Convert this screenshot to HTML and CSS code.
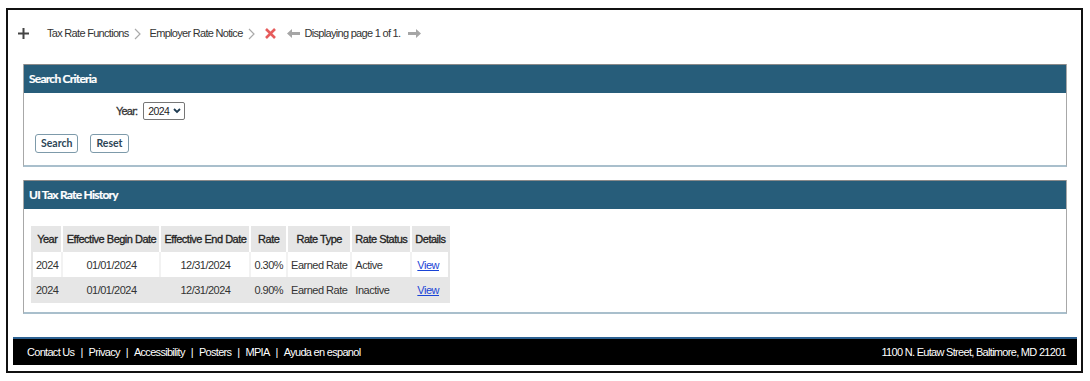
FILE: index.html
```html
<!DOCTYPE html>
<html>
<head>
<meta charset="utf-8">
<link rel="stylesheet" href="styles.css">
</head>
<body>
<div class="frame">
  <div class="crumbs">
    <svg class="plus" width="11" height="11" viewBox="0 0 11 11"><path d="M5.5 0v11M0 5.5h11" stroke="#444" stroke-width="2"/></svg>
    <span class="crumb">Tax Rate Functions</span>
    <svg class="chev" width="8" height="12" viewBox="0 0 8 12"><path d="M1 1l5 5-5 5" fill="none" stroke="#aaa" stroke-width="1.2"/></svg>
    <span class="crumb">Employer Rate Notice</span>
    <svg class="chev" width="8" height="12" viewBox="0 0 8 12"><path d="M1 1l5 5-5 5" fill="none" stroke="#aaa" stroke-width="1.2"/></svg>
    <svg class="close" width="11" height="11" viewBox="0 0 11 11"><path d="M1 1l9 9M10 1l-9 9" stroke="#e65c5c" stroke-width="2.6"/></svg>
    <svg class="arrow-l" width="13" height="9" viewBox="0 0 13 9"><path d="M0 4.5L5 0v3h8v3H5v3z" fill="#a6a6a6"/></svg>
    <span class="crumb">Displaying page 1 of 1.</span>
    <svg class="arrow-r" width="13" height="9" viewBox="0 0 13 9"><path d="M13 4.5L8 0v3H0v3h8v3z" fill="#a6a6a6"/></svg>
  </div>

  <div class="panel">
    <div class="panel-head">Search Criteria</div>
    <div class="panel-body search-body">
      <div class="year-row">
        <span class="label">Year:</span>
        <span class="select">2024
          <svg width="8" height="6" viewBox="0 0 8 6"><path d="M1 1l3 3 3-3" fill="none" stroke="#1e3b52" stroke-width="1.8"/></svg>
        </span>
      </div>
      <div class="buttons">
        <span class="btn">Search</span>
        <span class="btn">Reset</span>
      </div>
    </div>
  </div>

  <div class="panel panel2">
    <div class="panel-head">UI Tax Rate History</div>
    <div class="panel-body table-body">
      <table class="grid">
        <thead>
          <tr><th>Year</th><th>Effective Begin Date</th><th>Effective End Date</th><th>Rate</th><th>Rate Type</th><th>Rate Status</th><th>Details</th></tr>
        </thead>
        <tbody>
          <tr><td>2024</td><td class="ctr">01/01/2024</td><td class="ctr">12/31/2024</td><td class="rt">0.30%</td><td>Earned Rate</td><td>Active</td><td><a href="#">View</a></td></tr>
          <tr class="alt"><td>2024</td><td class="ctr">01/01/2024</td><td class="ctr">12/31/2024</td><td class="rt">0.90%</td><td>Earned Rate</td><td>Inactive</td><td><a href="#">View</a></td></tr>
        </tbody>
      </table>
    </div>
  </div>

  <div class="footer">
    <div class="links">
      <span>Contact Us</span><span class="sep">|</span><span>Privacy</span><span class="sep">|</span><span>Accessibility</span><span class="sep">|</span><span>Posters</span><span class="sep">|</span><span>MPIA</span><span class="sep">|</span><span>Ayuda en espanol</span>
    </div>
    <div class="addr">1100 N. Eutaw Street, Baltimore, MD 21201</div>
  </div>
</div>
</body>
</html>
```

FILE: styles.css
```css
html, body {
  margin: 0;
  padding: 0;
  background: #fff;
}
body {
  font-family: "Liberation Sans", Arial, sans-serif;
  font-size: 11px;
  color: #333;
}
.frame {
  margin: 8px 0 0 6px;
  width: 1073px;
  height: 361px;
  border: 2px solid #111;
  box-sizing: content-box;
}
.crumbs {
  display: flex;
  align-items: center;
  height: 18px;
  padding: 14px 0 0 10px;
}
.plus { margin-right: 18px; }
.crumb {
  color: #333;
  font-size: 11px;
  letter-spacing: -0.7px;
}
.chev { margin: 2px 8px 0 5px; }
.close { margin: 0 11px 0 1px; }
.arrow-l { margin-right: 5px; }
.arrow-r { margin-left: 8px; }
.panel {
  margin: 22px 14px 0 15px;
  border: 1px solid #a8a8a8;
  border-bottom: 2px solid #a9bfcc;
  border-top: none;
}
.panel2 { margin-top: 13px; }
.panel-head {
  height: 29px;
  background: #275d7a;
  border-top: 1px solid #8a8a8a;
  box-sizing: border-box;
  color: #fff;
  font-family: Lato, "Liberation Sans", sans-serif;
  font-weight: bold;
  font-size: 12px;
  line-height: 28px;
  padding-left: 5px;
  letter-spacing: -0.75px;
  -webkit-text-stroke: 0.2px #fff;
}
.search-body {
  padding: 9px 0 12px 11px;
}
.year-row {
  display: flex;
  align-items: center;
  height: 18px;
  padding-left: 81px;
}
.label {
  color: #333;
  font-size: 11px;
  letter-spacing: -0.8px;
  margin-right: 6px;
  -webkit-text-stroke: 0.3px #333;
}
.select {
  display: inline-flex;
  align-items: center;
  gap: 4px;
  height: 18px;
  box-sizing: border-box;
  border: 1px solid #767676;
  border-radius: 2px;
  padding: 0 3px 0 4px;
  font-size: 10.5px;
  letter-spacing: -0.6px;
  color: #222;
}
.buttons {
  display: flex;
  gap: 12px;
  margin-top: 14px;
}
.btn {
  display: inline-block;
  height: 19px;
  box-sizing: border-box;
  line-height: 17px;
  border: 1px solid #7d9aaa;
  border-radius: 3px;
  padding: 0 5px;
  font-family: Lato, "Liberation Sans", sans-serif;
  font-weight: bold;
  font-size: 10.5px;
  color: #2c4656;
}
.table-body {
  padding: 17px 0 9px 7px;
}
.grid {
  border-collapse: separate;
  border-spacing: 0;
  table-layout: fixed;
  background: #e6e6e6;
  border: 2px solid #e6e6e6;
  border-bottom-width: 1px;
  border-top: none;
  font-size: 11px;
  letter-spacing: -0.5px;
}
.grid th {
  height: 26px;
  font-weight: normal;
  color: #222;
  -webkit-text-stroke: 0.3px #222;
  background: #e6e6e6;
  border-left: 2px solid #fff;
  padding: 0 3px;
  white-space: nowrap;
}
.grid th:first-child { border-left: none; }
.grid td {
  height: 25px;
  padding: 0 3px;
  background: #fff;
  border-left: 2px solid #f2f2f2;
  white-space: nowrap;
  color: #333;
}
.grid td:first-child { border-left: none; }
.grid tr.alt td {
  background: #e6e6e6;
  border-left-color: #e6e6e6;
}
.grid th:nth-child(1) { width: 20px; }
.grid th:nth-child(2) { width: 90px; }
.grid th:nth-child(3) { width: 81px; }
.grid th:nth-child(4) { width: 25px; }
.grid th:nth-child(5) { width: 53px; }
.grid th:nth-child(6) { width: 50px; }
.grid th:nth-child(7) { width: 30px; }
.ctr { text-align: center; }
.rt { text-align: right; }
.grid a {
  color: #1a44d6;
  text-decoration: underline;
  padding-left: 2px;
}
.footer {
  margin: 23px 4px 0 5px;
  height: 28px;
  background: #000;
  border-top: 2px solid #2d6192;
  box-sizing: border-box;
  display: flex;
  align-items: center;
  justify-content: space-between;
  padding: 0 11px 0 14px;
  color: #fff;
  font-size: 11px;
  letter-spacing: -0.7px;
}
.sep { margin: 0 6px; }
```
